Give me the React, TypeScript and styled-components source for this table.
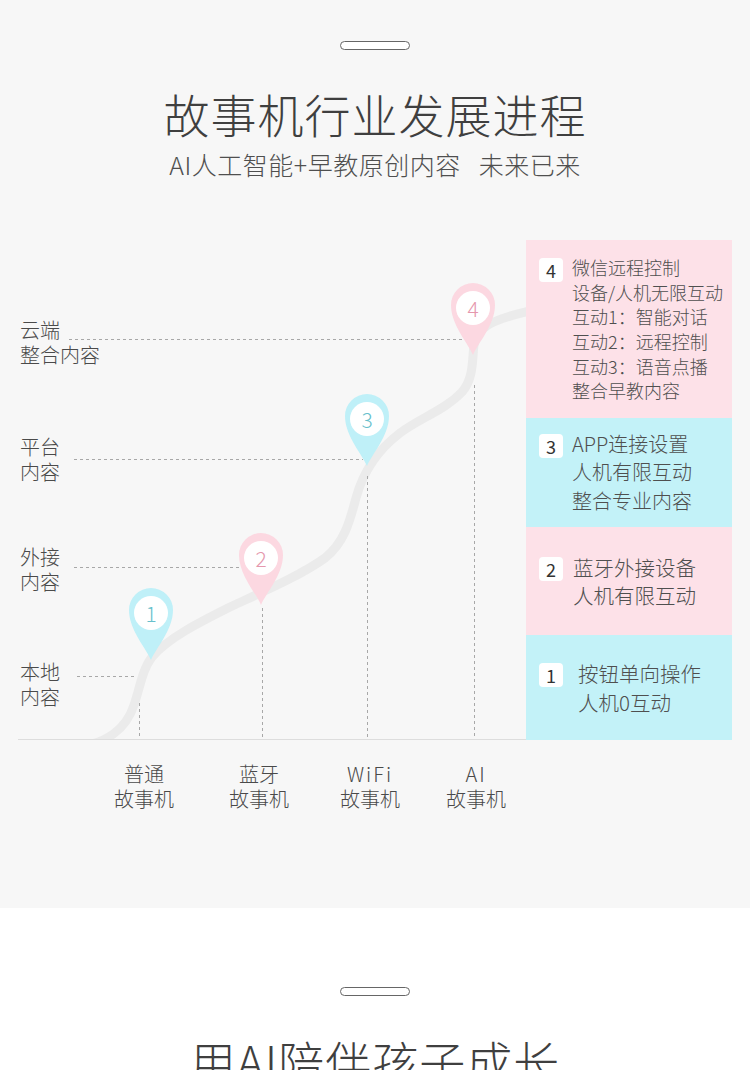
import React from "react";
import styled, { createGlobalStyle } from "styled-components";

type Tone = "pink" | "blue";

const GlobalStyle = createGlobalStyle`
  html, body {
    margin: 0;
    padding: 0;
    background: #ffffff;
  }
  body {
    font-family: "Noto Sans CJK SC", "Noto Sans", sans-serif;
    font-weight: 300;
    color: #444;
  }
  * {
    box-sizing: border-box;
  }
`;

const pinFill: Record<Tone, string> = { pink: "#fcd8e1", blue: "#bff0f8" };
const pinText: Record<Tone, string> = { pink: "#e597ad", blue: "#68bfcc" };
const panelFill: Record<Tone, string> = { pink: "#fde1e8", blue: "#c3f2f8" };

// Styled Components
const Page = styled.div`
  width: 750px;
  overflow: hidden;
`;

const GraySection = styled.section`
  height: 908px;
  background-color: #f7f7f7;
  padding-top: 41px;
`;

const WhiteSection = styled.section`
  background-color: #ffffff;
  padding-top: 79px;
  height: 162px;
  overflow: hidden;
`;

const Pill = styled.div`
  width: 70px;
  height: 9px;
  margin: 0 auto;
  border: 1.5px solid #666;
  border-radius: 5px;
  background-color: #ffffff;
`;

const Title = styled.h1<{ $gap: number }>`
  margin: ${(p) => p.$gap}px 0 0;
  font-size: 46px;
  line-height: 55px;
  font-weight: 300;
  letter-spacing: 1px;
  text-align: center;
  color: #3f3f3f;
`;

const Subtitle = styled.p`
  margin: 8px 0 0;
  font-size: 25px;
  line-height: 30px;
  letter-spacing: 0.5px;
  text-align: center;
  color: #4f4f4f;
  white-space: nowrap;
`;

const Spacer = styled.span`
  display: inline-block;
  width: 18px;
`;

const ChartRow = styled.div`
  display: flex;
  margin-top: 61px;
`;

const Canvas = styled.div`
  position: relative;
  width: 526px;
  height: 580px;
  flex-shrink: 0;
`;

const ChartDrawing = styled.svg`
  position: absolute;
  left: 0;
  top: 0;
`;

const AxisLabel = styled.div<{ $top: number }>`
  position: absolute;
  left: 20px;
  top: ${(p) => p.$top}px;
  font-size: 20px;
  line-height: 24.5px;
  color: #4a4a4a;
`;

const StageLabel = styled.div<{ $cx: number }>`
  position: absolute;
  left: ${(p) => p.$cx}px;
  top: 522px;
  transform: translateX(-50%);
  font-size: 20px;
  line-height: 24.5px;
  color: #4a4a4a;
  text-align: center;
  white-space: nowrap;
`;

const Line = styled.span<{ $spaced?: boolean }>`
  display: block;
  letter-spacing: ${(p) => (p.$spaced ? "2px" : "0")};
`;

const PinWrap = styled.div<{ $x: number; $top: number }>`
  position: absolute;
  left: ${(p) => p.$x - 22}px;
  top: ${(p) => p.$top}px;
  width: 44px;
  height: 72px;
`;

const PinNumber = styled.span<{ $tone: Tone }>`
  position: absolute;
  left: 0;
  top: 9px;
  width: 44px;
  text-align: center;
  font-size: 21px;
  line-height: 32px;
  color: ${(p) => pinText[p.$tone]};
`;

const Panels = styled.div`
  width: 206px;
  display: flex;
  flex-direction: column;
  align-self: flex-start;
`;

const Panel = styled.div<{ $tone: Tone; $height: number }>`
  height: ${(p) => p.$height}px;
  background-color: ${(p) => panelFill[p.$tone]};
  display: flex;
  align-items: center;
  padding-left: 13px;
`;

const PanelInner = styled.div<{ $gap: number }>`
  display: flex;
  align-items: flex-start;
  gap: ${(p) => p.$gap}px;
`;

const Badge = styled.div<{ $offset: number }>`
  width: 24px;
  height: 24px;
  margin-top: ${(p) => p.$offset}px;
  border-radius: 4px;
  background-color: #ffffff;
  display: flex;
  align-items: center;
  justify-content: center;
  font-size: 18px;
  font-weight: 400;
  color: #333;
  flex-shrink: 0;
`;

const PanelText = styled.div<{ $size: number; $lh: number }>`
  font-size: ${(p) => p.$size}px;
  line-height: ${(p) => p.$lh}px;
  color: #4f4f4f;
  white-space: nowrap;
`;

const axisLabels = [
  { top: 78, lines: ["云端", "整合内容"] },
  { top: 195, lines: ["平台", "内容"] },
  { top: 305, lines: ["外接", "内容"] },
  { top: 420, lines: ["本地", "内容"] },
];

const stages = [
  { cx: 144, lines: ["普通", "故事机"] },
  { cx: 259, lines: ["蓝牙", "故事机"] },
  { cx: 370, lines: ["WiFi", "故事机"] },
  { cx: 476, lines: ["AI", "故事机"] },
];

const pins: { n: number; x: number; top: number; tone: Tone }[] = [
  { n: 1, x: 151, top: 348, tone: "blue" },
  { n: 2, x: 261, top: 293, tone: "pink" },
  { n: 3, x: 367, top: 154, tone: "blue" },
  { n: 4, x: 473, top: 43, tone: "pink" },
];

const panels: {
  n: number;
  tone: Tone;
  height: number;
  size: number;
  lh: number;
  gap: number;
  lines: string[];
}[] = [
  {
    n: 4,
    tone: "pink",
    height: 178,
    size: 18,
    lh: 24.6,
    gap: 9,
    lines: [
      "微信远程控制",
      "设备/人机无限互动",
      "互动1：智能对话",
      "互动2：远程控制",
      "互动3：语音点播",
      "整合早教内容",
    ],
  },
  {
    n: 3,
    tone: "blue",
    height: 109,
    size: 20,
    lh: 28.5,
    gap: 9,
    lines: ["APP连接设置", "人机有限互动", "整合专业内容"],
  },
  {
    n: 2,
    tone: "pink",
    height: 108,
    size: 20.5,
    lh: 28,
    gap: 10,
    lines: ["蓝牙外接设备", "人机有限互动"],
  },
  {
    n: 1,
    tone: "blue",
    height: 105,
    size: 20.5,
    lh: 29,
    gap: 15,
    lines: ["按钮单向操作", "人机0互动"],
  },
];

const Pin: React.FC<{ n: number; x: number; top: number; tone: Tone }> = ({
  n,
  x,
  top,
  tone,
}) => (
  <PinWrap $x={x} $top={top}>
    <svg width="44" height="72" viewBox="0 0 44 72">
      <path
        d="M22 72 C17 60 0 42 0 22 A22 22 0 0 1 44 22 C44 42 27 60 22 72 Z"
        fill={pinFill[tone]}
      />
      <circle cx="22" cy="25" r="17" fill="#ffffff" />
    </svg>
    <PinNumber $tone={tone}>{n}</PinNumber>
  </PinWrap>
);

const App: React.FC = () => {
  return (
    <Page>
      <GlobalStyle />
      <GraySection>
        <Pill />
        <Title $gap={36}>故事机行业发展进程</Title>
        <Subtitle>
          AI人工智能+早教原创内容
          <Spacer />
          未来已来
        </Subtitle>

        <ChartRow>
          <Canvas>
            <ChartDrawing width="526" height="510" viewBox="0 0 526 510">
              <defs>
                <clipPath id="above-base">
                  <rect x="0" y="0" width="526" height="500" />
                </clipPath>
              </defs>
              {/* growth road */}
              <path
                clipPath="url(#above-base)"
                d="M82 506 C105 503 126 490 134 465 C140 448 142 430 152 417 C168 398 200 382 230 367 C260 353 300 336 325 318 C345 302 350 280 356 258 C362 236 375 212 400 193 C420 178 445 170 462 152 C474 138 472 120 474 105 C477 88 490 80 530 71"
                fill="none"
                stroke="#ebebeb"
                strokeWidth="9"
              />
              {/* baseline */}
              <line x1="18" y1="499.5" x2="526" y2="499.5" stroke="#dddddd" strokeWidth="1" />
              {/* guide lines */}
              <g stroke="#a8a8a8" strokeWidth="1" strokeDasharray="3 3" fill="none">
                <line x1="69" y1="99.5" x2="463" y2="99.5" />
                <line x1="74" y1="219.5" x2="363" y2="219.5" />
                <line x1="74" y1="327.5" x2="243" y2="327.5" />
                <line x1="77" y1="436.5" x2="135" y2="436.5" />
                <line x1="474.5" y1="145" x2="474.5" y2="499" />
                <line x1="367.5" y1="236" x2="367.5" y2="499" />
                <line x1="262.5" y1="368" x2="262.5" y2="499" />
                <line x1="139.5" y1="463" x2="139.5" y2="499" />
              </g>
            </ChartDrawing>

            {axisLabels.map((label) => (
              <AxisLabel key={label.top} $top={label.top}>
                {label.lines.map((text) => (
                  <Line key={text}>{text}</Line>
                ))}
              </AxisLabel>
            ))}

            {pins.map((pin) => (
              <Pin key={pin.n} {...pin} />
            ))}

            {stages.map((stage) => (
              <StageLabel key={stage.cx} $cx={stage.cx}>
                {stage.lines.map((text, i) => (
                  <Line key={text} $spaced={i === 0 && /^[A-Za-z]+$/.test(text)}>
                    {text}
                  </Line>
                ))}
              </StageLabel>
            ))}
          </Canvas>

          <Panels>
            {panels.map((panel) => (
              <Panel key={panel.n} $tone={panel.tone} $height={panel.height}>
                <PanelInner $gap={panel.gap}>
                  <Badge $offset={(panel.lh - 24) / 2 + 2}>{panel.n}</Badge>
                  <PanelText $size={panel.size} $lh={panel.lh}>
                    {panel.lines.map((text) => (
                      <Line key={text}>{text}</Line>
                    ))}
                  </PanelText>
                </PanelInner>
              </Panel>
            ))}
          </Panels>
        </ChartRow>
      </GraySection>

      <WhiteSection>
        <Pill />
        <Title $gap={37}>用AI陪伴孩子成长</Title>
      </WhiteSection>
    </Page>
  );
};

export default App;
